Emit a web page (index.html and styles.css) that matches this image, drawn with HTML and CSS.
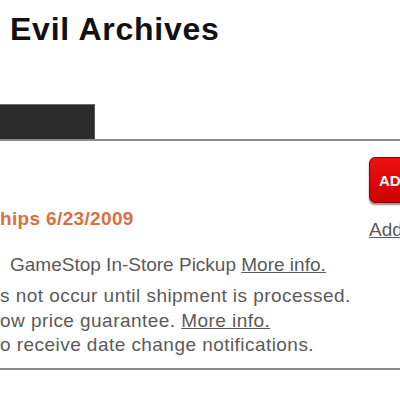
FILE: index.html
```html
<!DOCTYPE html>
<html lang="en">
<head>
    <meta charset="UTF-8">
    <title>Evil Archives</title>
    <link rel="stylesheet" href="styles.css">
</head>
<body>

    <div class="masthead">
        <h1 class="title">Evil Archives</h1>
    </div>

    <div class="tabs">
        <div class="tab active"></div>
    </div>

    <div class="product">
        <div class="details">
            <div class="ships">hips 6/23/2009</div>
            <p class="pickup">GameStop In-Store Pickup <a href="#">More info.</a></p>
            <p class="notes">
                <span class="line">s not occur until shipment is processed.</span>
                <span class="line">ow price guarantee. <a href="#">More info.</a></span>
                <span class="line">o receive date change notifications.</span>
            </p>
        </div>
        <div class="actions">
            <button class="cart">ADD TO CART</button>
            <a class="wish" href="#">Add to Wish List</a>
        </div>
    </div>

</body>
</html>
```

FILE: styles.css
```css
body {
    margin: 0;
    font-family: "Liberation Sans", Arial, sans-serif;
    background: #fff;
    overflow: hidden;
}
.masthead {
    height: 104px;
}
.title {
    margin: 0;
    padding: 11px 0 0 10px;
    font-size: 32px;
    line-height: 36px;
    font-weight: bold;
    letter-spacing: 0.75px;
    color: #111;
}
.tabs {
    display: flex;
    height: 35px;
    border-bottom: 2px solid #8a8a8a;
}
.tab {
    width: 95px;
}
.active {
    background: #2b2b2b;
    border-top: 1px solid #6a6a6a;
    border-right: 1px solid #555;
    box-sizing: border-box;
}
.product {
    display: flex;
    border-bottom: 2px solid #8a8a8a;
    padding-bottom: 10px;
    font-size: 19px;
    line-height: 24.5px;
    color: #5a5a5a;
}
.details {
    width: 369px;
    flex-shrink: 0;
    padding-top: 66px;
    white-space: nowrap;
}
.ships {
    font-weight: bold;
    letter-spacing: 0.35px;
    color: #d8703f;
}
.pickup {
    margin: 21px 0 0;
    padding-left: 10px;
}
.notes {
    margin: 7px 0 0;
    letter-spacing: 0.45px;
}
.line {
    display: block;
}
a {
    color: #5a5a5a;
    text-decoration: underline;
}
.actions {
    flex-shrink: 0;
    padding-top: 16px;
    white-space: nowrap;
}
.cart {
    display: block;
    width: 120px;
    height: 46px;
    padding: 0 0 0 9px;
    text-align: left;
    background: linear-gradient(#ee1111, #cc0000);
    border: 1px solid #8a0000;
    border-radius: 6px;
    box-shadow: 0 2px 2px rgba(0, 0, 0, 0.45);
    color: #fff;
    font-family: "Liberation Sans", Arial, sans-serif;
    font-size: 15px;
    font-weight: bold;
}
.wish {
    display: block;
    margin-top: 15px;
}
```
